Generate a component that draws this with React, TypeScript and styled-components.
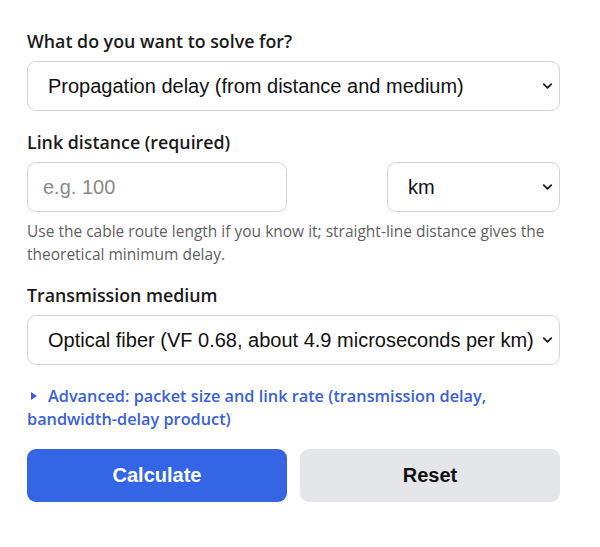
import React, { useState } from "react";
import styled, { createGlobalStyle } from "styled-components";
import { ChevronDown } from "lucide-react";

const GlobalStyle = createGlobalStyle`
  body {
    margin: 0;
    background: #ffffff;
    font-family: "Open Sans", "Noto Sans", sans-serif;
    color: #1a1a1a;
  }
`;

const Form = styled.form`
  width: 533px;
  padding: 29px 27px;
`;

const Field = styled.div<{ $gap?: number }>`
  margin-bottom: ${(p) => p.$gap ?? 19}px;
`;

const Label = styled.label`
  display: block;
  font-size: 17.8px;
  font-weight: 600;
  line-height: 25px;
  margin-bottom: 7px;
  color: #1a1a1a;
`;

const Row = styled.div`
  display: grid;
  grid-template-columns: 260px 173px;
  justify-content: space-between;
`;

const SelectWrap = styled.div`
  position: relative;
  svg {
    position: absolute;
    right: 5px;
    top: 50%;
    transform: translateY(-50%);
    pointer-events: none;
    color: #222;
  }
`;

const Select = styled.select`
  width: 100%;
  height: 50px;
  box-sizing: border-box;
  appearance: none;
  border: 1px solid #d1d5db;
  border-radius: 9px;
  background: #fff;
  padding: 0 24px 0 20px;
  font-family: "Liberation Sans", Arial, sans-serif;
  font-size: 20px;
  color: #111;
`;

const Input = styled.input`
  width: 100%;
  height: 50px;
  box-sizing: border-box;
  border: 1px solid #d1d5db;
  border-radius: 9px;
  padding: 0 15px;
  font-family: "Liberation Sans", Arial, sans-serif;
  font-size: 20px;
  color: #111;
  &::placeholder {
    color: #8a8a8a;
  }
`;

const Help = styled.p`
  margin: 8px 0 0;
  font-size: 15.5px;
  line-height: 23px;
  color: #5f5f5f;
`;

const Advanced = styled.details`
  margin-bottom: 18px;
  summary {
    list-style: none;
    cursor: pointer;
    font-size: 16.3px;
    font-weight: 600;
    line-height: 23px;
    color: #3a5fe0;
  }
  summary::-webkit-details-marker {
    display: none;
  }
  /* small right-pointing triangle in front of the summary text */
  summary::before {
    content: "";
    display: inline-block;
    width: 0;
    height: 0;
    border-top: 4px solid transparent;
    border-bottom: 4px solid transparent;
    border-left: 6px solid currentColor;
    margin: 0 11px 2px 4px;
  }
`;

const Buttons = styled.div`
  display: grid;
  grid-template-columns: 1fr 1fr;
  gap: 13px;
`;

const Button = styled.button<{ $primary?: boolean }>`
  height: 53px;
  border: none;
  border-radius: 9px;
  font-family: "Liberation Sans", Arial, sans-serif;
  font-size: 20px;
  font-weight: 700;
  cursor: pointer;
  background: ${(p) => (p.$primary ? "#3465e4" : "#e5e6ea")};
  color: ${(p) => (p.$primary ? "#ffffff" : "#111111")};
`;

const App = () => {
  const [distance, setDistance] = useState("");

  return (
    <>
      <GlobalStyle />
      <Form onSubmit={(e) => e.preventDefault()}>
        <Field>
          <Label>What do you want to solve for?</Label>
          <SelectWrap>
            <Select defaultValue="prop">
              <option value="prop">Propagation delay (from distance and medium)</option>
              <option value="dist">Distance (from delay and medium)</option>
            </Select>
            <ChevronDown size={15} strokeWidth={3} />
          </SelectWrap>
        </Field>

        <Field $gap={17}>
          <Label>Link distance (required)</Label>
          <Row>
            <Input
              placeholder="e.g. 100"
              value={distance}
              onChange={(e) => setDistance(e.target.value)}
            />
            <SelectWrap>
              <Select defaultValue="km">
                <option value="km">km</option>
                <option value="mi">mi</option>
                <option value="m">m</option>
              </Select>
              <ChevronDown size={15} strokeWidth={3} />
            </SelectWrap>
          </Row>
          <Help>
            Use the cable route length if you know it; straight-line distance gives the
            theoretical minimum delay.
          </Help>
        </Field>

        <Field $gap={20}>
          <Label>Transmission medium</Label>
          <SelectWrap>
            <Select defaultValue="fiber">
              <option value="fiber">
                Optical fiber (VF 0.68, about 4.9 microseconds per km)
              </option>
              <option value="copper">Copper cable</option>
              <option value="air">Radio / free space</option>
            </Select>
            <ChevronDown size={15} strokeWidth={3} />
          </SelectWrap>
        </Field>

        <Advanced>
          <summary>
            Advanced: packet size and link rate (transmission delay, bandwidth-delay
            product)
          </summary>
        </Advanced>

        <Buttons>
          <Button $primary type="submit">
            Calculate
          </Button>
          <Button type="reset">Reset</Button>
        </Buttons>
      </Form>
    </>
  );
};

export default App;
